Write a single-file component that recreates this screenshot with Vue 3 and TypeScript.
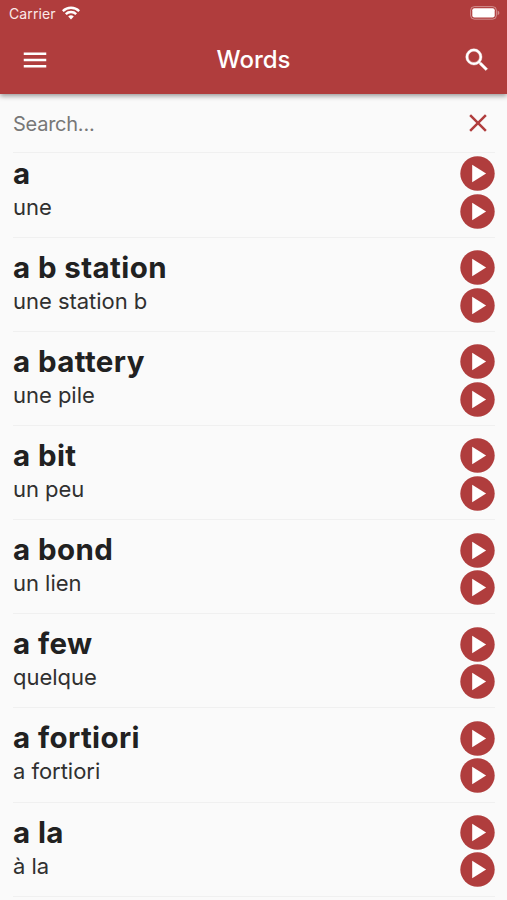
<script setup lang="ts">
interface Word {
  term: string
  translation: string
}

const words: Word[] = [
  { term: 'a', translation: 'une' },
  { term: 'a b station', translation: 'une station b' },
  { term: 'a battery', translation: 'une pile' },
  { term: 'a bit', translation: 'un peu' },
  { term: 'a bond', translation: 'un lien' },
  { term: 'a few', translation: 'quelque' },
  { term: 'a fortiori', translation: 'a fortiori' },
  { term: 'a la', translation: 'à la' },
]
</script>

<template>
  <div class="screen">
    <header class="top">
      <div class="status">
        <span class="carrier">Carrier</span>
        <svg class="wifi" width="18" height="14" viewBox="0 0 18 14">
          <path d="M.8 5.1a11.6 11.6 0 0 1 16.4 0M3.8 8.1a7.4 7.4 0 0 1 10.4 0" fill="none" stroke="#fff" stroke-width="2.4" />
          <path d="M9 13.4 6.2 10.6a4 4 0 0 1 5.6 0z" fill="#fff" />
        </svg>
        <svg class="battery" width="30" height="14" viewBox="0 0 30 14">
          <rect x=".6" y=".6" width="25.8" height="12.6" rx="3.8" fill="none" stroke="#fff" stroke-opacity=".42" />
          <rect x="2.3" y="2.3" width="22.4" height="9.2" rx="2" fill="#fff" />
          <path d="M27.6 4.6q1.8.8 1.8 2.3t-1.8 2.3z" fill="#fff" fill-opacity=".42" />
        </svg>
      </div>
      <div class="bar">
        <svg class="menu" width="30" height="30" viewBox="0 0 24 24"><path d="M3 18h18v-2H3v2zm0-5h18v-2H3v2zm0-7v2h18V6H3z" fill="#fff" /></svg>
        <h1>Words</h1>
        <svg class="find" width="30" height="30" viewBox="0 0 24 24"><path d="M15.5 14h-.79l-.28-.27A6.47 6.47 0 0 0 16 9.5 6.5 6.5 0 1 0 9.5 16c1.61 0 3.09-.59 4.23-1.57l.27.28v.79l5 4.99L20.49 19l-4.99-5zm-6 0C7.01 14 5 11.99 5 9.5S7.01 5 9.5 5 14 7.01 14 9.5 11.99 14 9.5 14z" fill="#fff" stroke="#fff" stroke-width=".3" /></svg>
      </div>
    </header>
    <div class="search">
      <input type="text" placeholder="Search..." />
      <svg width="30" height="30" viewBox="0 0 24 24"><path d="M19 6.41 17.59 5 12 10.59 6.41 5 5 6.41 10.59 12 5 17.59 6.41 19 12 13.41 17.59 19 19 17.59 13.41 12z" fill="#b03d3d" /></svg>
    </div>
    <ul class="list">
      <li v-for="word in words" :key="word.term">
        <div class="text">
          <strong>{{ word.term }}</strong>
          <span>{{ word.translation }}</span>
        </div>
        <div class="plays">
          <svg v-for="n in 2" :key="n" width="35" height="35" viewBox="0 0 35 35">
            <circle cx="17.5" cy="17.5" r="17.2" fill="#b03d3d" />
            <path d="M12.2 8.8v17.4L26.1 17.5z" fill="#fff" />
          </svg>
        </div>
      </li>
    </ul>
  </div>
</template>

<style>
body { margin: 0; background: #fafafa; }
</style>

<style scoped>
.screen { width: 507px; height: 900px; overflow: hidden; background: #fafafa; color: #212121; font-family: Inter, sans-serif; display: flex; flex-direction: column; }
.top { height: 94px; flex: none; background: #b03d3d; color: #fff; box-shadow: 0 2px 5px rgba(0, 0, 0, .4); z-index: 1; }
.status { height: 27px; display: flex; align-items: center; padding: 0 7px 0 9px; box-sizing: border-box; }
.carrier { font-size: 14px; line-height: 27px; color: #fbe9e9; letter-spacing: .1px; }
.wifi { margin-left: 6px; margin-top: -1px; }
.battery { margin-left: auto; margin-top: -1px; }
.bar { height: 65px; display: grid; grid-template-columns: 30px 1fr 30px; align-items: center; padding: 0 15px 0 20px; }
h1 { margin: 0; font-size: 24px; font-weight: 550; line-height: 32px; text-align: center; padding-right: 5px; }
.search { height: 59px; flex: none; box-sizing: border-box; margin: 0 12px 0 13px; border-bottom: 1px solid #f0f0f0; display: flex; align-items: center; justify-content: space-between; padding-right: 2px; }
input { border: 0; outline: 0; background: none; padding: 2px 0 0; width: 300px; font: 20px Inter, sans-serif; letter-spacing: -.25px; }
input::placeholder { color: #777; opacity: 1; }
.list { list-style: none; margin: 0; padding: 0 12px 0 13px; }
li { height: 94.1px; box-sizing: border-box; border-bottom: 1px solid #f0f0f0; display: flex; justify-content: space-between; padding-top: 12px; }
li:first-child { height: 85px; padding-top: 3px; }
.text { display: flex; flex-direction: column; }
strong { font-size: 29.5px; line-height: 34px; font-weight: 700; letter-spacing: .4px; }
.text span { font-size: 22px; line-height: 30px; color: #303030; padding-top: 2px; letter-spacing: -.03px; }
.plays { display: flex; flex-direction: column; gap: 2.4px; padding-top: .3px; }
.plays svg { display: block; }
</style>
